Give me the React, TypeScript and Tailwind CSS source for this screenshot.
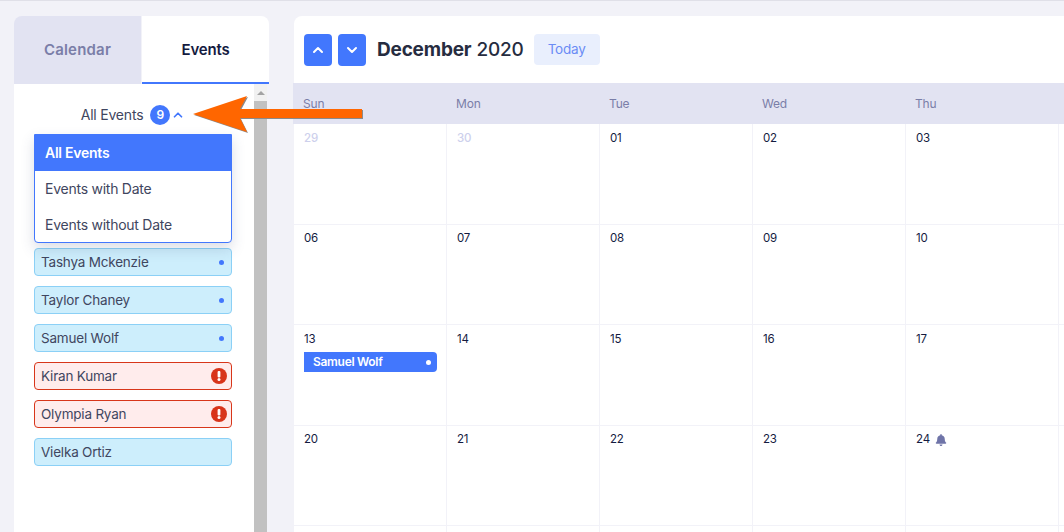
import { FaBell } from "react-icons/fa";
import { ChevronDown, ChevronUp } from "lucide-react";

const chips: { name: string; kind: "blue" | "red" | "plain" }[] = [
  { name: "Tashya Mckenzie", kind: "blue" },
  { name: "Taylor Chaney", kind: "blue" },
  { name: "Samuel Wolf", kind: "blue" },
  { name: "Kiran Kumar", kind: "red" },
  { name: "Olympia Ryan", kind: "red" },
  { name: "Vielka Ortiz", kind: "plain" },
];

const days = ["Sun", "Mon", "Tue", "Wed", "Thu", ""];
const weeks = [
  ["29", "30", "01", "02", "03", ""],
  ["06", "07", "08", "09", "10", ""],
  ["13", "14", "15", "16", "17", ""],
  ["20", "21", "22", "23", "24", ""],
  ["", "", "", "", "", ""],
];

function AlertIcon() {
  return (
    <svg width="16" height="16" viewBox="0 0 16 16" className="mr-[3px] shrink-0">
      <circle cx="8" cy="8" r="8" fill="#d8341a" />
      <rect x="6.6" y="3" width="2.8" height="6.4" rx="1" fill="#fff" />
      <circle cx="8" cy="11.6" r="1.5" fill="#fff" />
    </svg>
  );
}

function Chip({ name, kind }: { name: string; kind: "blue" | "red" | "plain" }) {
  const isRed = kind === "red";
  return (
    <div
      className={
        isRed
          ? "flex h-[28px] items-center justify-between rounded-[4px] border border-[#d8361a] bg-[#ffecec] pl-[6px] pr-[1px] text-[13.5px] tracking-[-0.2px] text-[#3f4660]"
          : "flex h-[28px] items-center justify-between rounded-[4px] border border-[#8bd0f6] bg-[#cdeefc] pl-[6px] pr-[7px] text-[13.5px] tracking-[-0.2px] text-[#3f4660]"
      }
    >
      <span>{name}</span>
      {kind === "blue" && <span className="h-[5px] w-[5px] rounded-full bg-[#4277fd]" />}
      {isRed && <AlertIcon />}
    </div>
  );
}

export default function App() {
  return (
    <div className="relative flex h-[532px] gap-[25px] overflow-hidden border-t border-[#e0e0e8] bg-[#f2f2f8] pl-[14px] pt-[15px] font-['Inter',sans-serif] tracking-[-0.2px]">
      {/* Sidebar */}
      <aside className="flex h-full w-[255px] shrink-0 flex-col">
        <div className="flex h-[68px] shrink-0 overflow-hidden rounded-t-[8px] font-semibold">
          <div className="flex w-[127px] items-center justify-center bg-[#e2e3f2] text-[15px] tracking-[0.2px] text-[#7a7ea8]">Calendar</div>
          <div className="ml-[1px] flex flex-1 items-center justify-center border-b-2 border-[#4277fd] bg-white pt-[2px] text-[15px] tracking-[-0.2px] text-[#141b3f]">Events</div>
        </div>
        <div className="flex flex-1">
          <div className="relative w-[240px] bg-white pl-[20px] pt-[20px]">
            <div className="flex h-[22px] w-[198px] items-center justify-center text-[14px] text-[#3f4660]">
              <span className="pb-[2px]">All Events</span>
              <span className="ml-[7px] flex h-[20px] w-[20px] items-center justify-center rounded-full bg-[#4277fd] text-[12px] font-semibold text-white">9</span>
              <ChevronUp className="ml-[1px] h-[14px] w-[14px] text-[#4277fd]" strokeWidth={3} />
            </div>
            <div className="absolute left-[20px] top-[50px] z-10 w-[198px] overflow-hidden rounded-b-[4px] border border-[#4277fd] bg-white text-[14px] tracking-[-0.25px] text-[#3f4660] shadow-[0_6px_14px_rgba(60,70,110,0.18)]">
              <div className="flex h-[36px] items-center bg-[#4277fd] pb-[1px] pl-[10px] font-semibold text-white">All Events</div>
              <div className="flex h-[36px] items-center pb-[1px] pl-[10px]">Events with Date</div>
              <div className="flex h-[35px] items-center pb-[1px] pl-[10px]">Events without Date</div>
            </div>
            <div className="mt-[122px] flex w-[198px] flex-col gap-[10px]">
              {chips.map((c) => (
                <Chip key={c.name} name={c.name} kind={c.kind} />
              ))}
            </div>
          </div>
          <div className="flex w-[13px] flex-col bg-[#f1f1f1]">
            <div className="flex h-[17px] shrink-0 items-center justify-center">
              <span className="h-0 w-0 border-x-[4px] border-b-[4px] border-x-transparent border-b-[#a3a3a3]" />
            </div>
            <div className="flex-1 bg-[#c1c1c1]" />
          </div>
        </div>
      </aside>

      {/* Calendar */}
      <main className="relative flex h-full w-[800px] shrink-0 flex-col rounded-tl-[8px] bg-white">
        <div className="flex h-[67px] shrink-0 items-center pl-[10px]">
          <button className="flex h-[32px] w-[28px] items-center justify-center rounded-[4px] bg-[#4277fd] text-white">
            <ChevronUp className="h-[16px] w-[16px]" strokeWidth={3} />
          </button>
          <button className="ml-[6px] flex h-[32px] w-[28px] items-center justify-center rounded-[4px] bg-[#4277fd] text-white">
            <ChevronDown className="h-[16px] w-[16px]" strokeWidth={3} />
          </button>
          <div className="ml-[11px] pt-[1px] text-[19px] text-[#262c40]">
            <span className="font-bold">December</span> <span className="font-medium">2020</span>
          </div>
          <button className="ml-[10px] flex h-[31px] w-[66px] items-center justify-center rounded-[4px] bg-[#e9effd] text-[13.5px] text-[#6b8cf5]">Today</button>
        </div>
        <div className="-ml-[1px] flex h-[41px] shrink-0 items-center bg-[#e2e3f2] pl-[1px] text-[12px] text-[#7a7ea8]">
          {days.map((d, i) => (
            <div key={i} className="w-[153px] shrink-0 pl-[9px]">{d}</div>
          ))}
        </div>
        {weeks.map((w, i) => (
          <div key={i} className="flex h-[100.6px] shrink-0 border-b border-[#f2f2f8]">
            {w.map((d, j) => {
              const muted = i === 0 && j < 2;
              return (
                <div
                  key={j}
                  className={
                    i === 0
                      ? "w-[153px] shrink-0 border-r border-[#f2f2f8] pl-[10px] pt-[8px]"
                      : "w-[153px] shrink-0 border-r border-[#f2f2f8] pl-[10px] pt-[7px]"
                  }
                >
                  <div className={muted ? "flex h-[14px] items-center text-[11.5px] font-medium text-[#cdd0ec]" : "flex h-[14px] items-center text-[11.5px] text-[#141b3f]"}>
                    {d}
                    {d === "24" && <FaBell className="ml-[5px] text-[12px] text-[#6f74a8]" />}
                  </div>
                  {d === "13" && (
                    <div className="mt-[6px] flex h-[20px] w-[133px] items-center justify-between rounded-r-[4px] bg-[#4277fd] pl-[9px] pr-[6px] text-[12px] font-semibold tracking-[-0.3px] text-white">
                      <span className="pb-[1px]">Samuel Wolf</span>
                      <span className="h-[5px] w-[5px] rounded-full bg-white" />
                    </div>
                  )}
                </div>
              );
            })}
          </div>
        ))}
      </main>

      {/* Annotation arrow */}
      <svg className="absolute left-[190px] top-[90px] z-20" width="180" height="50" viewBox="0 0 180 50">
        <polygon points="4,24 58,6 51,19 173,19 173,28 51,28 58,42" fill="#8a8a8a" />
        <polygon points="3,23 57,5 50,18 172,18 172,27 50,27 57,41" fill="#ff6600" />
      </svg>
    </div>
  );
}
